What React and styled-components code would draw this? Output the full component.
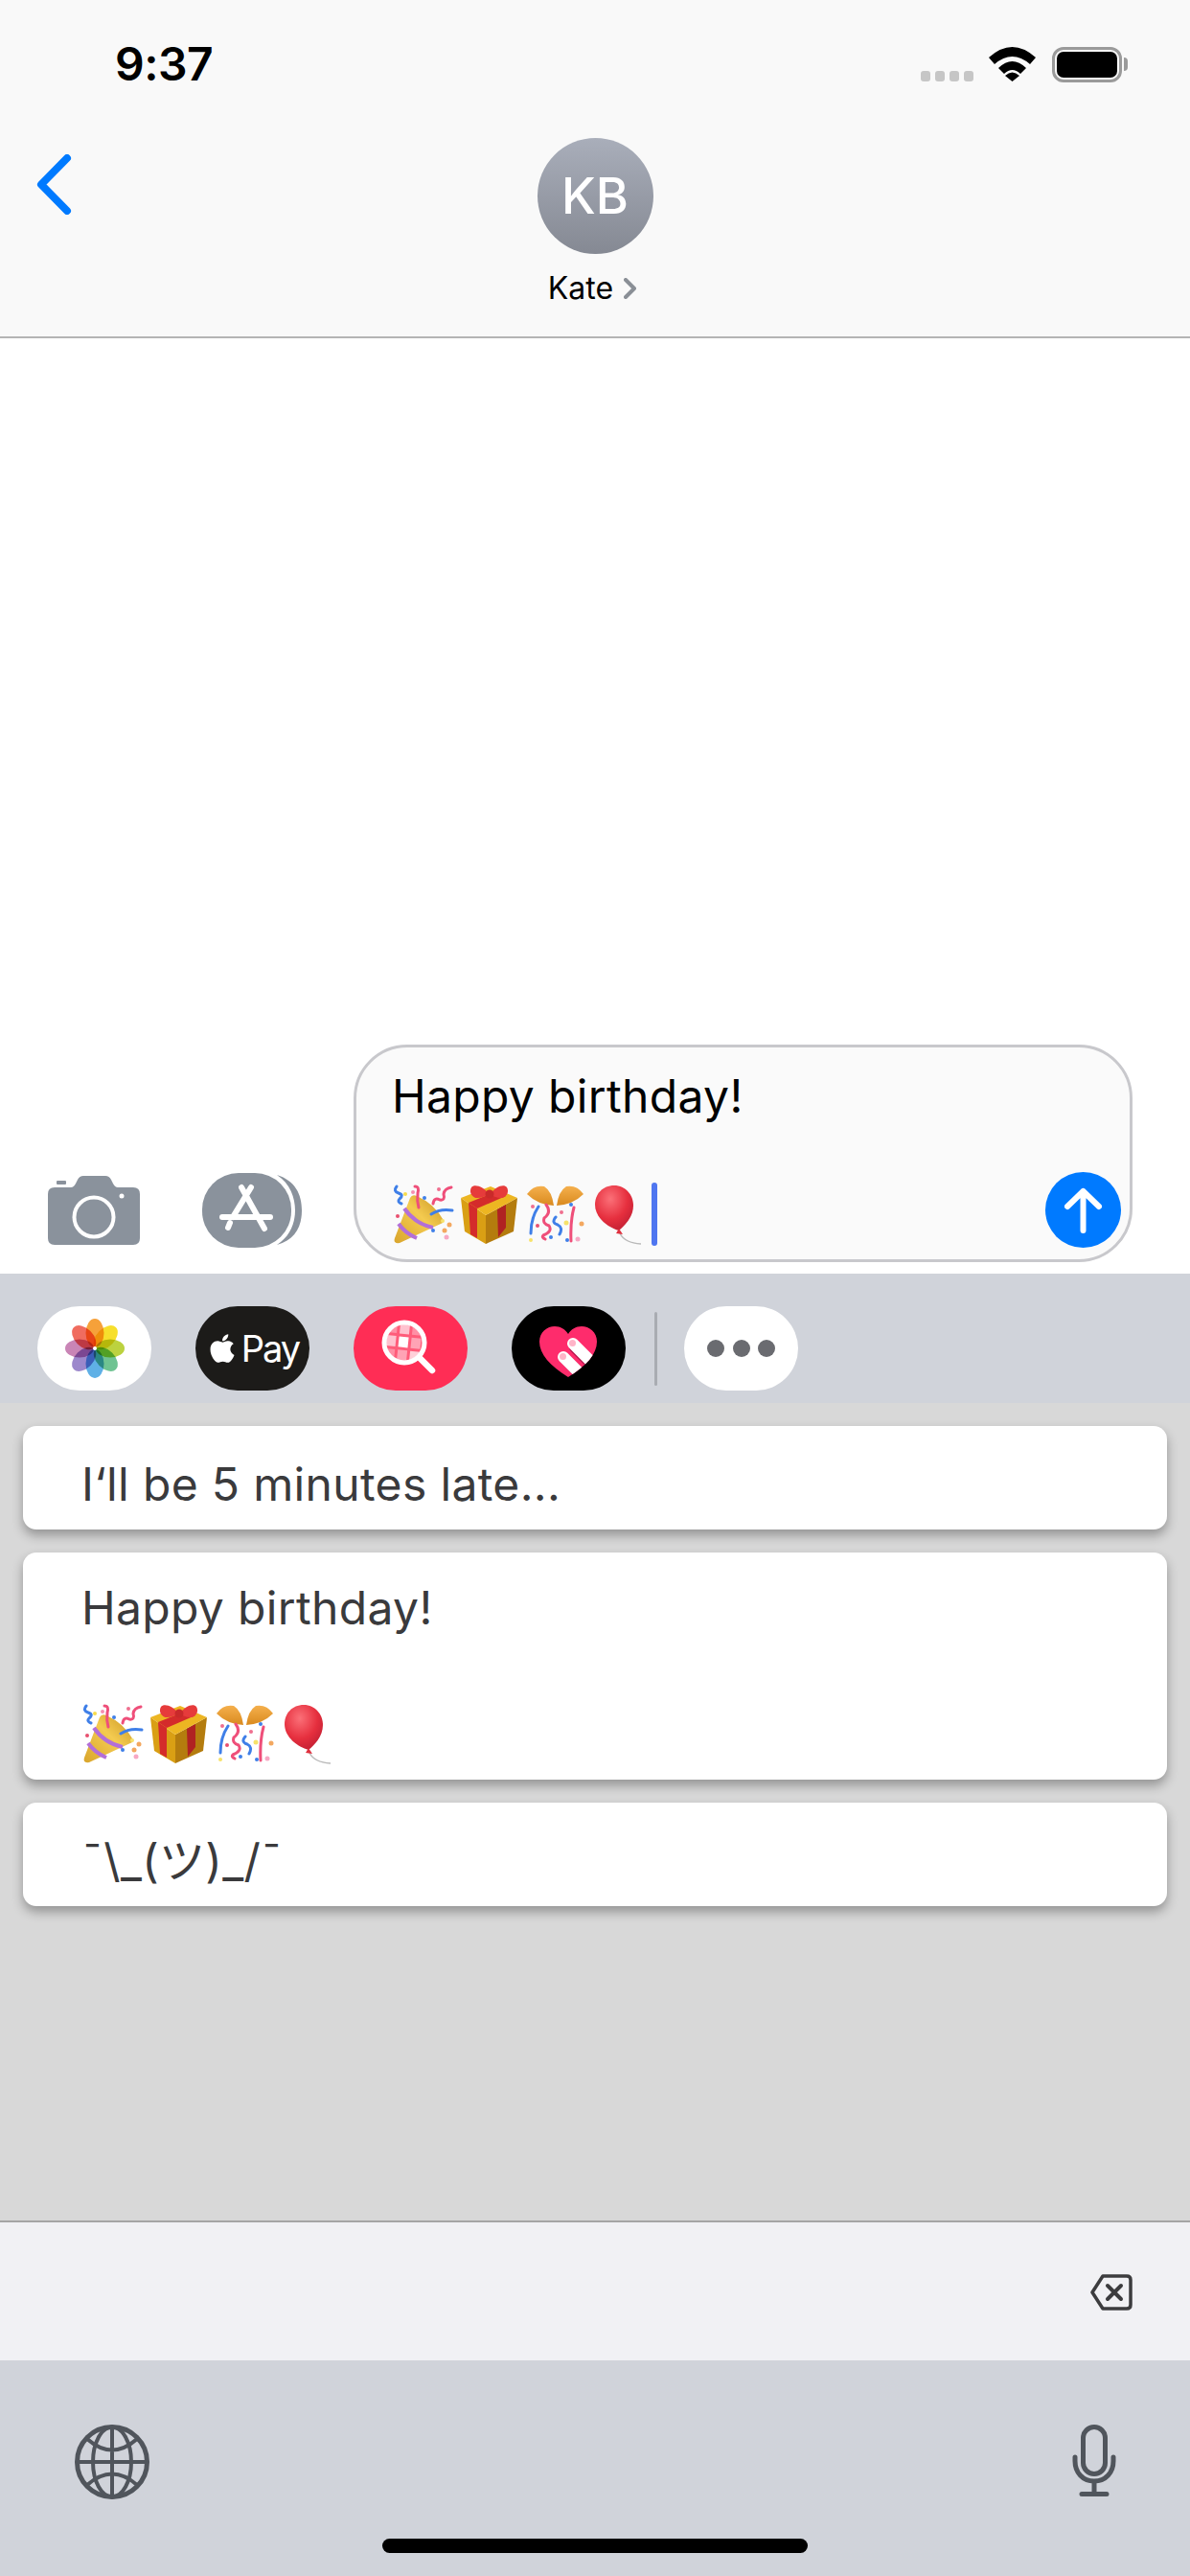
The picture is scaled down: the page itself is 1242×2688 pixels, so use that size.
import React from 'react'
import styled, { createGlobalStyle } from 'styled-components'
import { FaApple } from 'react-icons/fa'

const Global = createGlobalStyle`
  html, body {
    margin: 0;
    padding: 0;
    background: #fff;
  }
  * {
    box-sizing: border-box;
  }
`

const Phone = styled.div`
  width: 1242px;
  height: 2688px;
  display: flex;
  flex-direction: column;
  overflow: hidden;
  background: #fff;
  font-family: Inter, "Noto Sans CJK JP", "Liberation Sans", sans-serif;
  color: #000;
`

const Header = styled.header`
  height: 353px;
  flex: none;
  background: #f9f9f9;
  border-bottom: 2px solid #b4b4b4;
`

const StatusBar = styled.div`
  height: 144px;
  display: flex;
  justify-content: space-between;
  padding: 38px 71px 0 120px;
`

const Time = styled.span`
  font-size: 48px;
  font-weight: 600;
  line-height: 58px;
  letter-spacing: -0.5px;
`

const StatusIcons = styled.div`
  display: flex;
  align-items: flex-start;
  padding-top: 11px;
`

const Signal = styled.div`
  display: flex;
  gap: 5px;
  margin: 25px 16px 0 0;
`

const SignalDot = styled.i`
  width: 10px;
  height: 11px;
  border-radius: 3px;
  background: #c6c6c6;
`

const Battery = styled.div`
  position: relative;
  width: 73px;
  height: 37px;
  margin-left: 17px;
  padding: 2px;
  border: 3px solid #9a9a9a;
  border-radius: 12px;

  &::before {
    content: '';
    display: block;
    height: 100%;
    border-radius: 7px;
    background: #000;
  }

  &::after {
    content: '';
    position: absolute;
    top: 8px;
    right: -9px;
    width: 4px;
    height: 14px;
    border-radius: 0 4px 4px 0;
    background: #9a9a9a;
  }
`

const Nav = styled.div`
  display: grid;
  grid-template-columns: 1fr auto 1fr;
`

const BackLink = styled.a`
  display: block;
  padding: 17px 0 0 38px;
  line-height: 0;
`

const Contact = styled.div`
  display: flex;
  flex-direction: column;
  align-items: center;
`

const Avatar = styled.div`
  width: 121px;
  height: 121px;
  display: flex;
  align-items: center;
  justify-content: center;
  border-radius: 50%;
  background: linear-gradient(180deg, #a9aeba, #858993);
  color: #fff;
  font-size: 52px;
  font-weight: 500;
`

const ContactName = styled.div`
  display: flex;
  align-items: center;
  gap: 11px;
  margin: 16px 6px 0 0;
  font-size: 32px;
  line-height: 40px;
`

const Thread = styled.main`
  height: 976px;
  flex: none;
  display: flex;
  align-items: flex-end;
  padding: 0 60px 12px 50px;
`

const ThreadIcon = styled.button`
  flex: none;
  padding: 0;
  border: 0;
  background: none;
  line-height: 0;
  margin: 0 ${p => p.$right}px ${p => p.$bottom}px 0;
`

const Composer = styled.div`
  position: relative;
  flex: 1;
  height: 227px;
  padding: 13px 0 0 37px;
  border: 3px solid #c8c8cc;
  border-radius: 56px;
  background: #fafafa;
`

const ComposerText = styled.div`
  font-size: 48px;
  line-height: 76px;
  height: 76px;
  letter-spacing: 0.35px;
`

const EmojiLine = styled.div`
  display: flex;
  align-items: flex-start;
  margin-top: ${p => p.$top}px;
  line-height: 0;
`

const Caret = styled.i`
  width: 6px;
  height: 66px;
  margin: -1px 0 0 3px;
  border-radius: 3px;
  background: #4f76f0;
`

const SendButton = styled.button`
  position: absolute;
  right: 9px;
  bottom: 12px;
  width: 79px;
  height: 79px;
  padding: 0;
  border: 0;
  border-radius: 50%;
  background: #007aff;
  line-height: 0;
`

const AppStrip = styled.div`
  height: 135px;
  flex: none;
  display: flex;
  align-items: center;
  padding: 34px 0 13px 39px;
  background: #d0d3da;
`

const PillGroup = styled.div`
  display: flex;
  gap: 46px;
`

const Pill = styled.div`
  width: 119px;
  height: 88px;
  display: flex;
  align-items: center;
  justify-content: center;
  border-radius: 44px;
  background: ${p => p.$bg};
`

const PayLabel = styled.span`
  display: flex;
  align-items: center;
  gap: 3px;
  color: #fff;
  font-size: 38px;
  font-weight: 400;
  letter-spacing: -2px;
`

const StripDivider = styled.i`
  width: 3px;
  height: 77px;
  margin: 0 28px 0 30px;
  border-radius: 2px;
  background: #a9acb2;
`

const MoreDots = styled.div`
  display: flex;
  gap: 8.5px;
`

const MoreDot = styled.i`
  width: 18px;
  height: 18px;
  border-radius: 50%;
  background: #6a6b70;
`

const Phrases = styled.section`
  flex: 1;
  display: flex;
  flex-direction: column;
  gap: 24px;
  padding: 24px;
  background: #d8d8d8;
`

const Phrase = styled.div`
  height: ${p => p.$height}px;
  padding: ${p => p.$top}px 61px 0;
  border-radius: 14px;
  background: #fff;
  box-shadow: 0 6px 12px rgba(0, 0, 0, 0.32);
  color: #3a3a3c;
  font-size: 48px;
  line-height: 76px;
  letter-spacing: 0.35px;
`

const DeleteBar = styled.div`
  height: 146px;
  flex: none;
  display: flex;
  justify-content: flex-end;
  padding: 54px 60px 0 0;
  border-top: 2px solid #a5a5a5;
  background: #f1f1f4;
`

const KeyboardFoot = styled.footer`
  height: 225px;
  flex: none;
  position: relative;
  display: flex;
  justify-content: space-between;
  align-items: flex-start;
  padding: 67px 77px 0 78px;
  background: #d0d3da;
`

const HomeBar = styled.i`
  position: absolute;
  left: 399px;
  bottom: 24px;
  width: 444px;
  height: 15px;
  border-radius: 8px;
  background: #000;
`

const Petal = styled.ellipse`
  fill: ${p => p.$color};
  mix-blend-mode: multiply;
`

const petals = ['#f6a13a', '#f7df2c', '#bcd23f', '#6fc392', '#5fb0e6', '#9c88cc', '#c985b6', '#f06c5f']

const WifiIcon = () => (
  <svg width="49" height="36" viewBox="0 0 49 36">
    <path d="M0 11Q24.5-11 49 11L43 18Q24.5 2 6 18Z" />
    <path d="M10 22Q24.5 8 39 22L33 28Q24.5 20 16 28Z" />
    <path d="M24.5 36L17 30Q24.5 23 32 30Z" />
  </svg>
)

const BackIcon = () => (
  <svg width="37" height="63" viewBox="0 0 37 63" fill="none" stroke="#007aff" strokeWidth="8" strokeLinecap="round" strokeLinejoin="round">
    <path d="M32 4L5 31.5 32 59" />
  </svg>
)

const NameChevron = () => (
  <svg width="13" height="22" viewBox="0 0 13 22" fill="none" stroke="#8a8f96" strokeWidth="4" strokeLinecap="round" strokeLinejoin="round">
    <path d="M2 2L11 11 2 20" />
  </svg>
)

const CameraIcon = () => (
  <svg width="96" height="72" viewBox="0 0 96 72">
    <path fill="#8a929c" d="M7 12H24Q27 12 29 8L31 4Q33 0 37 0H60Q64 0 66 4L68 8Q70 12 73 12H89Q96 12 96 19V65Q96 72 89 72H7Q0 72 0 65V19Q0 12 7 12Z" />
    <rect x="9" y="5" width="10" height="4" rx="1" fill="#8a929c" />
    <circle cx="48" cy="43" r="20.5" fill="none" stroke="#fff" strokeWidth="4" />
    <circle cx="77" cy="21" r="2.5" fill="#fff" />
  </svg>
)

const AppStoreIcon = () => (
  <svg width="104" height="78" viewBox="0 0 104 78">
    <rect width="93" height="78" rx="38" fill="#8a929c" />
    <path fill="#8a929c" d="M78 2C97 8 104 22 104 39 104 56 97 70 78 75 92 66 97 52 97 39 97 26 92 11 78 2Z" />
    <path fill="none" stroke="#fff" strokeWidth="6" strokeLinecap="round" d="M41 15L65 58M51 15L32 46M29 52L27 57M21 46H71" />
  </svg>
)

const SendIcon = () => (
  <svg width="79" height="79" viewBox="0 0 79 79" fill="none" stroke="#fff" strokeWidth="6" strokeLinecap="round" strokeLinejoin="round">
    <path d="M39.5 61V20M23 36L39.5 20 56 36" />
  </svg>
)

const PartyPopper = () => (
  <svg width="70" height="66" viewBox="0 0 70 66" fill="none">
    <defs>
      <linearGradient id="popper-cone" x1="0" y1="1" x2="1" y2="0">
        <stop offset="0" stopColor="#d9a52c" />
        <stop offset="0.55" stopColor="#f4cb50" />
        <stop offset="1" stopColor="#c8921f" />
      </linearGradient>
    </defs>
    <path fill="url(#popper-cone)" d="M3 57L19 15Q21 11 26 13Q44 21 53 37Q55 41 51 42L8 62Q1 63 3 57Z" />
    <path stroke="#b36fd8" strokeWidth="4" d="M13 26Q24 42 43 46M7 42Q14 52 26 57" />
    <path stroke="#3f7fe8" strokeWidth="3" strokeLinecap="round" d="M5 3Q1 8 7 10 13 12 8 16 5 19 10 21M41 32Q50 26 63 28" />
    <path stroke="#ef4f7a" strokeWidth="3" strokeLinecap="round" d="M24 3Q29 3 27 10 26 18 28 25M43 21Q44 14 50 17 56 18 54 11 55 5 62 4" />
    <circle cx="14" cy="11" r="2" fill="#f7dc4c" />
    <circle cx="22" cy="9" r="2" fill="#f58fb0" />
    <circle cx="34" cy="15" r="2" fill="#3f7fe8" />
    <circle cx="49" cy="6" r="2" fill="#ef6f8f" />
    <circle cx="6" cy="34" r="2" fill="#e8506f" />
    <circle cx="53" cy="39" r="2" fill="#f7e26a" />
    <circle cx="43" cy="49" r="2" fill="#3f7fe8" />
    <circle cx="60" cy="43" r="2.5" fill="#f3a860" />
    <circle cx="55" cy="49" r="2.5" fill="#f3a860" />
    <circle cx="57" cy="56" r="2.5" fill="#f7a8c4" />
  </svg>
)

const GiftBox = () => (
  <svg width="70" height="66" viewBox="0 0 70 66">
    <path fill="#d99f14" d="M2 15L28 33V63L6 50Z" />
    <path fill="#b47c0e" d="M61 15L28 33V63L57 50Z" />
    <path fill="#edb622" d="M2 15L33 3 61 15 28 33Z" />
    <path fill="#d42b2b" d="M10 20L19 26V57L12 53Z" />
    <path fill="#b02222" d="M40 27L49 22V46L41 56Z" />
    <path fill="#d42b2b" d="M10 20L40 8 49 13 19 26Z" />
    <path fill="#e63b3b" d="M31 11C26 3 16 0 13 4 10 9 14 15 19 15 24 15 28 13 31 11ZM33 11C38 3 47 0 50 4 53 9 49 15 44 15 39 15 35 13 33 11Z" />
    <circle cx="32" cy="11" r="4.5" fill="#c92a2a" />
  </svg>
)

const ConfettiBall = () => (
  <svg width="70" height="66" viewBox="0 0 70 66" fill="none">
    <defs>
      <linearGradient id="confetti-shell" x1="0" y1="0" x2="0" y2="1">
        <stop offset="0" stopColor="#f5b04d" />
        <stop offset="1" stopColor="#d98a1e" />
      </linearGradient>
    </defs>
    <path fill="url(#confetti-shell)" d="M1 11Q8 1 19 3 27 8 29 23 12 22 1 11ZM60 11Q53 1 42 3 34 8 32 23 49 22 60 11Z" />
    <path stroke="#3f7fe8" strokeWidth="3" strokeLinecap="round" d="M13 24Q5 36 5 52M31 35Q26 41 33 43 39 46 35 53" />
    <path stroke="#ef4f7a" strokeWidth="3" strokeLinecap="round" d="M21 22Q27 30 19 36 17 42 24 44 28 50 18 54 16 56 20 58M50 25Q46 40 47 60" />
    <circle cx="7" cy="24" r="2" fill="#ef6f8f" />
    <circle cx="12" cy="44" r="2" fill="#e8506f" />
    <circle cx="5" cy="59" r="2" fill="#f7e26a" />
    <circle cx="26" cy="56" r="2" fill="#3f7fe8" />
    <circle cx="37" cy="30" r="2" fill="#ef6f8f" />
    <circle cx="42" cy="41" r="2.5" fill="#f7e26a" />
    <circle cx="47" cy="22" r="2" fill="#3f7fe8" />
    <circle cx="58" cy="42" r="2.5" fill="#f3a860" />
    <circle cx="43" cy="59" r="2" fill="#3f7fe8" />
    <circle cx="54" cy="58" r="2.5" fill="#f7a8c4" />
  </svg>
)

const Balloon = () => (
  <svg width="58" height="66" viewBox="0 0 58 66" fill="none">
    <defs>
      <radialGradient id="balloon-fill" cx="0.4" cy="0.3" r="0.75">
        <stop offset="0" stopColor="#fb7078" />
        <stop offset="0.6" stopColor="#e62f3e" />
        <stop offset="1" stopColor="#c21f33" />
      </radialGradient>
    </defs>
    <path stroke="#b9b9b9" strokeWidth="1.5" d="M28 52Q33 62 50 63" />
    <path fill="url(#balloon-fill)" d="M22 2C34 2 42 12 42 23 42 35 33 44 27 49 16 46 2 36 2 22 2 11 10 2 22 2Z" />
    <path fill="#e0303e" d="M27 47L31 53 24 52Z" />
  </svg>
)

const PartyEmoji = () => (
  <>
    <PartyPopper />
    <GiftBox />
    <ConfettiBall />
    <Balloon />
  </>
)

const PhotosIcon = () => (
  <svg width="64" height="64" viewBox="-32 -32 64 64" style={{ isolation: 'isolate' }}>
    {petals.map((color, i) => (
      <Petal key={color} $color={color} cx="0" cy="-16" rx="9.5" ry="15" transform={`rotate(${i * 45})`} />
    ))}
    <circle r="2" fill="#fff" />
  </svg>
)

const SearchIcon = () => (
  <svg width="119" height="88" viewBox="0 0 119 88" fill="none">
    <defs>
      <clipPath id="search-lens">
        <circle cx="53" cy="38" r="19" />
      </clipPath>
    </defs>
    <g clipPath="url(#search-lens)" transform="rotate(6 53 38)">
      <rect x="30" y="15" width="46" height="46" fill="#ff5c7a" />
      <rect x="34" y="18" width="10" height="11" fill="#ff8fa5" />
      <rect x="47" y="18" width="10" height="11" fill="#ffc2cf" />
      <rect x="60" y="18" width="10" height="11" fill="#ff8fa5" />
      <rect x="34" y="32" width="10" height="11" fill="#ffc2cf" />
      <rect x="47" y="32" width="10" height="11" fill="#fff" />
      <rect x="60" y="32" width="10" height="11" fill="#ffa3b5" />
      <rect x="34" y="46" width="10" height="11" fill="#ff8fa5" />
      <rect x="47" y="46" width="10" height="11" fill="#ffa3b5" />
      <rect x="60" y="46" width="10" height="11" fill="#ffd0d9" />
    </g>
    <circle cx="53" cy="38" r="21" stroke="#fff" strokeWidth="5" />
    <path stroke="#fff" strokeWidth="6.5" strokeLinecap="round" d="M69 54L82 67" />
  </svg>
)

const HeartIcon = () => (
  <svg width="119" height="88" viewBox="0 0 119 88" fill="none">
    <defs>
      <clipPath id="heart-shape">
        <path d="M59 74C40 62 29 50 29 37 29 27 37 21 45 21 51 21 56 24 59 29 62 24 67 21 73 21 81 21 89 27 89 37 89 50 78 62 59 74Z" />
      </clipPath>
    </defs>
    <path fill="#fe2c6c" d="M59 74C40 62 29 50 29 37 29 27 37 21 45 21 51 21 56 24 59 29 62 24 67 21 73 21 81 21 89 27 89 37 89 50 78 62 59 74Z" />
    <g clipPath="url(#heart-shape)" strokeLinecap="round" strokeWidth="12">
      <path stroke="#b81a50" d="M66 43L90 67M56 55L76 75" />
      <path stroke="#fff" d="M64 39L90 65M54 53L76 75" />
    </g>
    <circle cx="63.5" cy="38.5" r="3.5" fill="#ffb4c8" />
    <circle cx="53.5" cy="52.5" r="3.5" fill="#ffb4c8" />
  </svg>
)

const DeleteIcon = () => (
  <svg width="44" height="38" viewBox="0 0 44 38" fill="none" stroke="#3c3c3e" strokeLinecap="round" strokeLinejoin="round">
    <path strokeWidth="3.5" d="M13 2H38Q42 2 42 6V32Q42 36 38 36H13L2 19Z" />
    <path strokeWidth="4" d="M18 12L32 26M32 12L18 26" />
  </svg>
)

const GlobeIcon = () => (
  <svg width="78" height="78" viewBox="0 0 78 78" fill="none" stroke="#50555c" strokeWidth="4">
    <circle cx="39" cy="39" r="36.5" strokeWidth="5" />
    <ellipse cx="39" cy="39" rx="20" ry="36.5" />
    <path d="M39 2V76M2 39H76M13 15Q39 38 65 15M13 63Q39 40 65 63" />
  </svg>
)

const MicIcon = () => (
  <svg width="46" height="76" viewBox="0 0 46 76" fill="none" stroke="#50555c" strokeWidth="5" strokeLinecap="round">
    <rect x="11.5" y="2.5" width="23" height="49" rx="11.5" />
    <path d="M3 34V38C3 50 11 59 23 59 35 59 43 50 43 38V34M23 59V72M10 72.5H36" />
  </svg>
)

const App = () => {
  return (
    <Phone>
      <Global />
      <Header>
        <StatusBar>
          <Time>9:37</Time>
          <StatusIcons>
            <Signal>
              {[0, 1, 2, 3].map(i => <SignalDot key={i} />)}
            </Signal>
            <WifiIcon />
            <Battery />
          </StatusIcons>
        </StatusBar>
        <Nav>
          <BackLink><BackIcon /></BackLink>
          <Contact>
            <Avatar>KB</Avatar>
            <ContactName>Kate <NameChevron /></ContactName>
          </Contact>
        </Nav>
      </Header>

      <Thread>
        <ThreadIcon $right={65} $bottom={18}><CameraIcon /></ThreadIcon>
        <ThreadIcon $right={54} $bottom={15}><AppStoreIcon /></ThreadIcon>
        <Composer>
          <ComposerText>Happy birthday!</ComposerText>
          <EmojiLine $top={53}>
            <PartyEmoji />
            <Caret />
          </EmojiLine>
          <SendButton><SendIcon /></SendButton>
        </Composer>
      </Thread>

      <AppStrip>
        <PillGroup>
          <Pill $bg="#fff"><PhotosIcon /></Pill>
          <Pill $bg="#1c1b19">
            <PayLabel><FaApple size={34} />Pay</PayLabel>
          </Pill>
          <Pill $bg="#ff2d55"><SearchIcon /></Pill>
          <Pill $bg="#000"><HeartIcon /></Pill>
        </PillGroup>
        <StripDivider />
        <Pill $bg="#fff">
          <MoreDots>
            {[0, 1, 2].map(i => <MoreDot key={i} />)}
          </MoreDots>
        </Pill>
      </AppStrip>

      <Phrases>
        <Phrase $top={23} $height={108}>I‘ll be 5 minutes late...</Phrase>
        <Phrase $top={20} $height={237}>
          Happy birthday!
          <EmojiLine $top={61}>
            <PartyEmoji />
          </EmojiLine>
        </Phrase>
        <Phrase $top={23} $height={108}>¯\_(ツ)_/¯</Phrase>
      </Phrases>

      <DeleteBar><DeleteIcon /></DeleteBar>

      <KeyboardFoot>
        <GlobeIcon />
        <MicIcon />
        <HomeBar />
      </KeyboardFoot>
    </Phone>
  )
}

export default App
